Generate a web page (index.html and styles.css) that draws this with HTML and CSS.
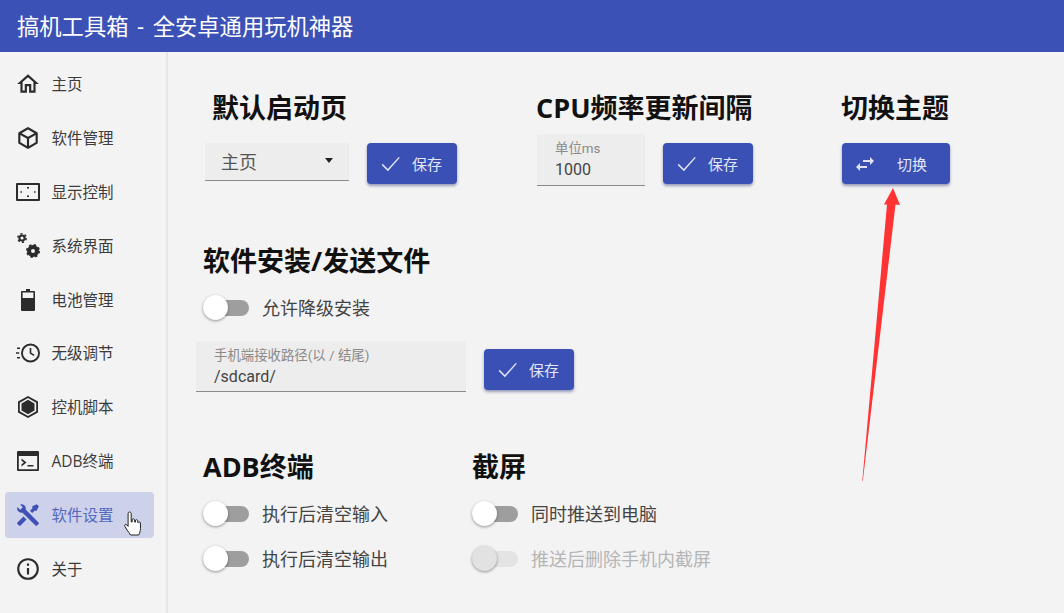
FILE: index.html
```html
<!DOCTYPE html>
<html lang="zh-CN">
<head>
    <meta charset="UTF-8">
    <meta name="viewport" content="width=device-width, initial-scale=1.0">
    <title>搞机工具箱</title>
    <link rel="stylesheet" href="styles.css">
</head>
<body>

<header class="app-bar">搞机工具箱 - 全安卓通用玩机神器</header>

<div class="app-body">
    <nav class="side-nav">
        <div class="nav-item">
            <svg class="nav-icon" viewBox="0 0 24 24"><path d="M12 5.69L17 10.19V18H15V12H9V18H7V10.19L12 5.69M12 3L2 12H5V20H11V14H13V20H19V12H22"/></svg>
            <span>主页</span>
        </div>
        <div class="nav-item">
            <svg class="nav-icon" viewBox="0 0 24 24"><path d="M21,16.5C21,16.88 20.79,17.21 20.47,17.38L12.57,21.82C12.41,21.94 12.21,22 12,22C11.79,22 11.59,21.94 11.43,21.82L3.53,17.38C3.21,17.21 3,16.88 3,16.5V7.5C3,7.12 3.21,6.79 3.53,6.62L11.43,2.18C11.59,2.06 11.79,2 12,2C12.21,2 12.41,2.06 12.57,2.18L20.47,6.62C20.79,6.79 21,7.12 21,7.5V16.5M12,4.15L6.04,7.5L12,10.85L17.96,7.5L12,4.15M5,15.91L11,19.29V12.58L5,9.21V15.91M19,15.91V9.21L13,12.58V19.29L19,15.91Z"/></svg>
            <span>软件管理</span>
        </div>
        <div class="nav-item">
            <svg class="nav-icon" viewBox="-1 -1 26 26"><path d="M1 3h22a1 1 0 0 1 1 1v16a1 1 0 0 1-1 1H1a1 1 0 0 1-1-1V4a1 1 0 0 1 1-1M2 5v14h20V5zM11 7h2v1.500h-2zM11 15.500h2V17h-2zM4.500 11.200H6v1.600H4.500zM18 11.200h1.500v1.600H18z"/></svg>
            <span>显示控制</span>
        </div>
        <div class="nav-item">
            <svg class="nav-icon" viewBox="-1 -1 26 26">
                <circle class="gear-ring" cx="17" cy="17" r="4"/>
                <circle class="gear-teeth" cx="17" cy="17" r="6"/>
                <circle class="gear-ring-small" cx="6" cy="4" r="2.600"/>
                <circle class="gear-teeth-small" cx="6" cy="4" r="4.200"/>
            </svg>
            <span>系统界面</span>
        </div>
        <div class="nav-item">
            <svg class="nav-icon" viewBox="-1 -1 26 26"><path d="M10 1h4v2h4c.5 0 1 .4 1 1v18c0 .5-.5 1-1 1H6c-.5 0-1-.5-1-1V4c0-.6.5-1 1-1h4zM6.600 4.600V10h10.800V4.600z"/></svg>
            <span>电池管理</span>
        </div>
        <div class="nav-item">
            <svg class="nav-icon" viewBox="-1 -1 26 26"><path d="M14.500 2.500a9.500 9.500 0 1 0 0 19 9.500 9.500 0 0 0 0-19m0 1.900a7.600 7.600 0 1 1 0 15.200 7.600 7.600 0 0 1 0-15.200M13.700 7h1.600v4.800l3.300 2-.8 1.300-4.100-2.500zM1 6.500h3V8H1zM0 11.300h3.200v1.500H0zM1 16h3v1.500H1z"/></svg>
            <span>无级调节</span>
        </div>
        <div class="nav-item">
            <svg class="nav-icon" viewBox="-1 -1 26 26"><path d="M12 1l10 5.600v10.800L12 23 2 17.400V6.600zM12 3.100L3.800 7.700v8.600l8.200 4.600 8.200-4.600V7.700z"/><path d="M12 4.800l6.500 3.600v7.200L12 19.200l-6.500-3.600V8.400z"/></svg>
            <span>控机脚本</span>
        </div>
        <div class="nav-item">
            <svg class="nav-icon" viewBox="-1 -1 26 26"><path d="M2 2h20a1 1 0 0 1 1 1v18a1 1 0 0 1-1 1H2a1 1 0 0 1-1-1V3a1 1 0 0 1 1-1M2.800 7v13.200h18.400V7zM5.500 9.500l5 4-5 4v-2.200l2.400-1.800-2.400-1.800zM11.500 16h6v1.600h-6z"/></svg>
            <span>ADB终端</span>
        </div>
        <div class="nav-item active">
            <svg class="nav-icon" viewBox="0 0 24 24"><path d="M21.71 20.29L20.29 21.71A1 1 0 0 1 18.88 21.71L7 9.85A3.81 3.81 0 0 1 6 10A4 4 0 0 1 2.22 4.7L4.76 7.24L5.29 6.71L6.71 5.29L7.24 4.76L4.7 2.22A4 4 0 0 1 10 6A3.81 3.81 0 0 1 9.85 7L21.71 18.88A1 1 0 0 1 21.71 20.29M2.29 18.88A1 1 0 0 0 2.29 20.29L3.71 21.71A1 1 0 0 0 5.12 21.71L10.59 16.25L7.76 13.42M20 2L16 4V6L13.83 8.17L15.83 10.17L18 8H20L22 4Z"/></svg>
            <span>软件设置</span>
            <svg class="hand-cursor" viewBox="0 0 18 30"><path d="M5.500 2c1 0 1.700.7 1.700 1.800v8.200l1-.2V9.600c0-1 1.800-1.200 2.300 0l.3 2.600.7-.1v-1.700c0-1 1.900-1 2.200.2l.2 2.100.5-.1c.4-1 1.900-.8 2 .4l.1 5.500c0 2.800-1 4.500-1.800 6.500H6.500c-.8-1.700-2.300-3.300-3.500-5l-2.200-3.800c-.7-1.400.9-2.400 2-1.300l1.300 1.500V3.800C4 2.700 4.600 2 5.500 2z"/></svg>
        </div>
        <div class="nav-item">
            <svg class="nav-icon" viewBox="0 0 24 24"><path d="M11,9H13V7H11M12,20C7.59,20 4,16.41 4,12C4,7.59 7.59,4 12,4C16.41,4 20,7.59 20,12C20,16.41 16.41,20 12,20M12,2A10,10 0 0,0 2,12A10,10 0 0,0 12,22A10,10 0 0,0 22,12A10,10 0 0,0 12,2M11,17H13V11H11V17Z"/></svg>
            <span>关于</span>
        </div>
    </nav>

    <main class="content">
        <div class="row-top">
            <section class="col-start">
                <h2 class="title indent">默认启动页</h2>
                <div class="controls">
                    <div class="select-box">
                        <span>主页</span>
                        <i class="caret"></i>
                    </div>
                    <button class="btn btn-save">
                        <svg class="check" viewBox="0 0 24 24"><path d="M2.500 13l6.500 6.500L22 5"/></svg>
                        <span>保存</span>
                    </button>
                </div>
            </section>
            <section class="col-cpu">
                <h2 class="title">CPU频率更新间隔</h2>
                <div class="controls">
                    <div class="text-field field-cpu">
                        <label>单位ms</label>
                        <div class="value">1000</div>
                    </div>
                    <button class="btn btn-save">
                        <svg class="check" viewBox="0 0 24 24"><path d="M2.500 13l6.500 6.500L22 5"/></svg>
                        <span>保存</span>
                    </button>
                </div>
            </section>
            <section class="col-theme">
                <h2 class="title">切换主题</h2>
                <div class="controls">
                    <button class="btn btn-theme">
                        <svg class="swap" viewBox="0 0 24 24"><path d="M21,9L17,5V8H10V10H17V13M7,11L3,15L7,19V16H14V14H7V11Z"/></svg>
                        <span>切换</span>
                    </button>
                </div>
            </section>
        </div>

        <section class="block-install">
            <h2 class="title indent">软件安装/发送文件</h2>
            <div class="switch-row first">
                <i class="switch"></i>
                <span>允许降级安装</span>
            </div>
            <div class="path-row">
                <div class="text-field field-path">
                    <label>手机端接收路径(以 / 结尾)</label>
                    <div class="value">/sdcard/</div>
                </div>
                <button class="btn btn-save">
                    <svg class="check" viewBox="0 0 24 24"><path d="M2.500 13l6.500 6.500L22 5"/></svg>
                    <span>保存</span>
                </button>
            </div>
        </section>

        <div class="row-bottom">
            <section class="col-adb">
                <h2 class="title">ADB终端</h2>
                <div class="switch-row first">
                    <i class="switch"></i>
                    <span>执行后清空输入</span>
                </div>
                <div class="switch-row">
                    <i class="switch"></i>
                    <span>执行后清空输出</span>
                </div>
            </section>
            <section>
                <h2 class="title">截屏</h2>
                <div class="switch-row first">
                    <i class="switch"></i>
                    <span>同时推送到电脑</span>
                </div>
                <div class="switch-row disabled">
                    <i class="switch"></i>
                    <span>推送后删除手机内截屏</span>
                </div>
            </section>
        </div>
    </main>
</div>

<!-- red arrow annotation drawn over the screenshot -->
<svg class="arrow-note" viewBox="0 0 1064 613"><path d="M893 188L900 205L895.500 204.500L862.800 481L862.300 481L887 204.500L884 204.500Z"/></svg>

</body>
</html>
```

FILE: styles.css
```css
* {
    box-sizing: border-box;
}
body {
    font-family: "Roboto", "Noto Sans CJK SC", sans-serif;
    background-color: #f3f3f3;
    color: #333;
    margin: 0;
    width: 1064px;
    height: 613px;
    overflow: hidden;
}
.app-bar {
    height: 52px;
    background-color: #3b51b6;
    color: #fff;
    font-size: 22.300px;
    line-height: 54px;
    padding-left: 17px;
    word-spacing: 3.500px;
    white-space: nowrap;
}
.app-body {
    display: flex;
    height: 561px;
}

/* sidebar */
.side-nav {
    width: 168px;
    flex-shrink: 0;
    border-right: 2px solid #e6e6e6;
    padding: 9px 12px 0 5px;
    display: flex;
    flex-direction: column;
    gap: 7.900px;
}
.nav-item {
    height: 46px;
    display: flex;
    align-items: center;
    padding-left: 10px;
    gap: 10.500px;
    font-family: "Open Sans", "Noto Sans CJK SC", sans-serif;
    font-size: 15.500px;
    color: #3c3c3c;
    border-radius: 4px;
    position: relative;
}
.nav-item span {
    margin-top: -1px;
}
.nav-icon {
    width: 26px;
    height: 26px;
    fill: #2b2b2b;
    flex-shrink: 0;
}
.nav-item.active {
    background-color: #cdd1e9;
    color: #5568c0;
}
.nav-item.active .nav-icon {
    fill: #3f51b5;
}
.gear-ring {
    fill: none;
    stroke: #2b2b2b;
    stroke-width: 4;
}
.gear-teeth {
    fill: none;
    stroke: #2b2b2b;
    stroke-width: 2;
    stroke-dasharray: 2.400 2.310;
}
.gear-ring-small {
    fill: none;
    stroke: #2b2b2b;
    stroke-width: 2;
}
.gear-teeth-small {
    fill: none;
    stroke: #2b2b2b;
    stroke-width: 1.500;
    stroke-dasharray: 2.200 2.200;
}
.hand-cursor {
    position: absolute;
    left: 119px;
    top: 18px;
    width: 18px;
    height: 30px;
    fill: #fff;
    stroke: #222;
    stroke-width: 1;
}

/* main area */
.content {
    flex: 1;
    padding: 38px 0 0 28px;
}
.title {
    margin: 0;
    font-family: "Open Sans", "Noto Sans CJK SC", sans-serif;
    font-size: 27px;
    font-weight: 700;
    line-height: 36px;
    color: #111;
    white-space: nowrap;
}
.title.indent {
    padding-left: 7px;
}
.controls {
    display: flex;
    margin-top: 8px;
    height: 52px;
}
.row-top {
    display: flex;
    padding-left: 9px;
}
.col-start {
    width: 332px;
}
.col-cpu {
    width: 305px;
}
.col-theme {
    width: 120px;
}
.col-cpu .title,
.col-theme .title {
    margin-left: -1px;
}
.select-box {
    width: 144px;
    height: 38px;
    margin-top: 9px;
    background-color: #ededed;
    border-bottom: 1px solid #8a8a8a;
    font-size: 18px;
    color: #555;
    padding: 0 16px 2px;
    display: flex;
    align-items: center;
    justify-content: space-between;
}
.caret {
    width: 0;
    height: 0;
    border-left: 4.500px solid transparent;
    border-right: 4.500px solid transparent;
    border-top: 5px solid #222;
}
.btn {
    height: 41px;
    border: 0;
    border-radius: 4px;
    background-color: #3a50b5;
    color: #e4e7f5;
    font-family: inherit;
    font-size: 15px;
    display: flex;
    align-items: center;
    box-shadow: 0 2px 3px rgba(40, 50, 110, 0.45);
}
.btn-save {
    width: 90px;
    margin: 9px 0 0 18px;
    padding: 0 0 0 13px;
    gap: 11px;
}
.check {
    width: 21px;
    height: 21px;
    fill: none;
    stroke: #dfe3f4;
    stroke-width: 1.700;
}
.swap {
    width: 24px;
    height: 24px;
    fill: #dfe3f4;
}
.btn-theme {
    width: 108px;
    margin-top: 9px;
    padding-left: 11px;
    gap: 20px;
}
.text-field {
    background-color: #ededed;
    border-bottom: 1px solid #8a8a8a;
}
.text-field label {
    display: block;
    font-size: 13.400px;
    line-height: 16px;
    color: #8a8a8a;
    white-space: nowrap;
}
.text-field .value {
    font-size: 16px;
    line-height: 21px;
    margin-top: 2px;
    color: #444;
}
.field-cpu {
    width: 108px;
    height: 52px;
    padding: 7px 0 0 18px;
}
.field-path {
    width: 270px;
    height: 51px;
    padding: 7px 0 0 18px;
}
.block-install {
    margin-top: 57px;
}
.switch-row {
    display: flex;
    align-items: center;
    height: 25px;
    margin-top: 20px;
    padding-left: 7px;
    font-size: 18px;
    color: #444;
    gap: 13px;
    white-space: nowrap;
}
.switch-row span {
    margin-top: -2px;
}
.switch-row.first {
    margin-top: 16px;
}
.switch {
    width: 46px;
    height: 16px;
    border-radius: 8px;
    background-color: #9e9e9e;
    position: relative;
    display: block;
    flex-shrink: 0;
}
.switch::before {
    content: "";
    position: absolute;
    left: 0;
    top: -5px;
    width: 25px;
    height: 25px;
    border-radius: 50%;
    background-color: #fff;
    box-shadow: 0 1px 3px rgba(0, 0, 0, 0.4);
}
.switch-row.disabled {
    color: #b5b5b5;
}
.switch-row.disabled .switch {
    background-color: #e4e4e4;
}
.switch-row.disabled .switch::before {
    background-color: #e2e2e2;
}
.path-row {
    display: flex;
    margin-top: 21px;
}
.path-row .btn-save {
    margin: 8px 0 0 18px;
}
.row-bottom {
    display: flex;
    margin-top: 57px;
    padding-left: 7px;
}
.row-bottom .switch-row {
    padding-left: 0;
}
.col-adb {
    width: 269px;
}

/* annotation */
.arrow-note {
    position: absolute;
    left: 0;
    top: 0;
    width: 1064px;
    height: 613px;
    fill: #ff3333;
    pointer-events: none;
}
```
